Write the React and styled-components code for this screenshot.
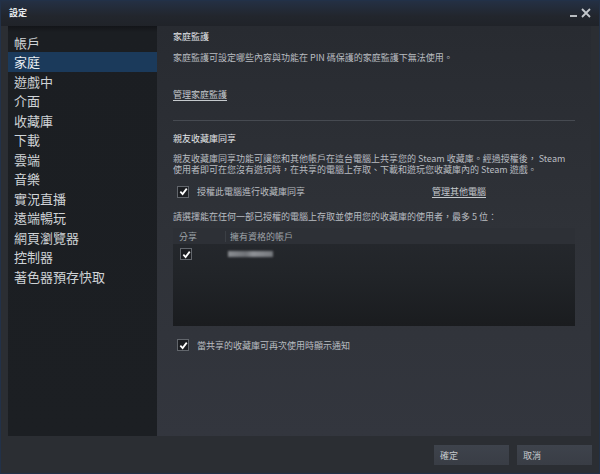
import React from 'react';
import styled, { createGlobalStyle } from 'styled-components';

const Global = createGlobalStyle`
  html, body { margin: 0; padding: 0; background: #1b1e23; }
  body { font-family: "Noto Sans CJK TC", "Noto Sans", Arial, sans-serif; }
`;

const Window = styled.div`
  width: 600px;
  height: 474px;
  box-sizing: border-box;
  border: 1px solid #223148;
  background: #2b2e33;
  display: flex;
  flex-direction: column;
  overflow: hidden;
`;

const TitleBar = styled.div`
  height: 25px;
  flex: none;
  display: flex;
  align-items: center;
  justify-content: space-between;
  padding: 0 8px 0 8px;
  background: linear-gradient(180deg, #243044 0%, #22262d 60%, #202329 100%);
`;

const Title = styled.span`
  color: #e8ebee;
  font-size: 9px;
  font-weight: 700;
  margin-top: -2px;
`;

const WinControls = styled.div`
  display: flex;
  align-items: center;
  gap: 3px;
  margin-top: -2px;
`;

const Main = styled.div`
  flex: 1;
  display: flex;
  padding: 0 8px 0 7px;
  min-height: 0;
`;

const Sidebar = styled.nav`
  width: 149px;
  flex: none;
  padding-top: 6.5px;
  box-sizing: border-box;
  background: linear-gradient(180deg, #131519 0px, #1b1e22 6px, #1c1f23 100%);
`;

const NavItem = styled.div`
  height: 19.5px;
  line-height: 19.5px;
  padding-left: 6px;
  font-size: 13px;
  color: ${p => (p.$active ? '#e9eef2' : '#cfd3d6')};
  background: ${p => (p.$active ? '#1b3a5b' : 'transparent')};
  white-space: nowrap;
`;

const Content = styled.section`
  flex: 1;
  padding: 5px 16px 0 16px;
  background: linear-gradient(180deg, #282b31 0%, #2f3238 50%, #33363e 100%);
  color: #b9bdc1;
  font-size: 9px;
  line-height: 11px;
`;

const Heading = styled.div`
  color: #e3e6e9;
  font-size: 9px;
  line-height: 12px;
  margin-top: ${p => p.$top || 0}px;
`;

const Text = styled.p`
  margin: ${p => p.$top || 0}px 0 0 0;
  font-size: 9px;
  line-height: 11.5px;
  white-space: nowrap;
`;

const LinkRow = styled.div`
  margin-top: ${p => p.$top || 0}px;
`;

const Link = styled.a`
  display: inline-block;
  color: #c5c9cd;
  text-decoration: underline;
  text-underline-offset: 2px;
  font-size: 9px;
  line-height: 12px;
`;

const Divider = styled.hr`
  border: 0;
  height: 1px;
  background: #464a51;
  margin: 19px 0 0 0;
`;

const CheckRow = styled.label`
  display: flex;
  align-items: center;
  margin-top: ${p => p.$top || 0}px;
  padding-left: 4px;
  height: 12px;
`;

const Box = styled.span`
  width: 10px;
  height: 10px;
  flex: none;
  border: 1px solid #62666c;
  background: #1c1e22;
  display: flex;
  align-items: center;
  justify-content: center;
`;

const CheckLabel = styled.span`
  margin-left: 8px;
  color: #b9bdc1;
  white-space: nowrap;
`;

const Spacer = styled.span`
  flex: 1;
`;

const SideLink = styled(Link)`
  margin-right: 89px;
`;

const Table = styled.div`
  margin-top: 6px;
  height: 98px;
  display: flex;
  flex-direction: column;
  background: linear-gradient(180deg, #26292e 0%, #212428 50%, #1a1c1f 100%);
`;

const TableHead = styled.div`
  height: 16px;
  flex: none;
  display: grid;
  grid-template-columns: 52px 1fr;
  align-items: center;
  background: #2d3036;
  color: #9ea3a8;
`;

const HeadCell = styled.div`
  padding-left: ${p => p.$pad || 6}px;
  border-left: ${p => (p.$sep ? '1px solid #3b3f45' : 'none')};
  line-height: 11px;
`;

const TableRow = styled.div`
  display: grid;
  grid-template-columns: 48px 1fr;
  align-items: center;
  height: 20px;
  padding-left: 7px;
`;

const Blurred = styled.span`
  display: inline-block;
  width: 45px;
  height: 6px;
  background: linear-gradient(90deg, #8a8d92 0%, #6f7277 40%, #8e9196 55%, #75787d 100%);
  filter: blur(1.2px);
`;

const Footer = styled.div`
  height: 37px;
  flex: none;
  display: flex;
  justify-content: flex-end;
  gap: 8px;
  padding: 9px 7px 0 0;
  box-sizing: border-box;
  background: #2b2e33;
`;

const Button = styled.button`
  width: 75px;
  height: 20px;
  border: 0;
  padding: 0 0 0 6px;
  text-align: left;
  background: linear-gradient(180deg, #3e434c 0%, #393d45 100%);
  color: #c4c8cc;
  font-family: inherit;
  font-size: 9px;
`;

const Check = () => (
  <svg width="9" height="9" viewBox="0 0 10 10">
    <path d="M1.5 5.2 L4 7.8 L8.6 1.8" fill="none" stroke="#ffffff" strokeWidth="2" />
  </svg>
);

const CheckBox = () => (
  <Box>
    <Check />
  </Box>
);

const navItems = ['帳戶', '家庭', '遊戲中', '介面', '收藏庫', '下載', '雲端', '音樂', '實況直播', '遠端暢玩', '網頁瀏覽器', '控制器', '著色器預存快取'];

export default function App() {
  return (
    <>
      <Global />
      <Window>
        <TitleBar>
          <Title>設定</Title>
          <WinControls>
            <svg width="8" height="10" viewBox="0 0 8 10">
              <rect x="0" y="7" width="7" height="2" fill="#b8bcc0" />
            </svg>
            <svg width="10" height="10" viewBox="0 0 10 10">
              <path d="M1 1 L9 9 M9 1 L1 9" stroke="#c4c8cc" strokeWidth="1.8" />
            </svg>
          </WinControls>
        </TitleBar>
        <Main>
          <Sidebar>
            {navItems.map(item => (
              <NavItem key={item} $active={item === '家庭'}>{item}</NavItem>
            ))}
          </Sidebar>
          <Content>
            <Heading>家庭監護</Heading>
            <Text $top={9}>家庭監護可設定哪些內容與功能在 PIN 碼保護的家庭監護下無法使用。</Text>
            <LinkRow $top={25}>
              <Link>管理家庭監護</Link>
            </LinkRow>
            <Divider />
            <Heading $top={12}>親友收藏庫同享</Heading>
            <Text $top={8}>
              親友收藏庫同享功能可讓您和其他帳戶在這台電腦上共享您的 Steam 收藏庫。經過授權後， Steam
              <br />
              使用者即可在您沒有遊玩時，在共享的電腦上存取、下載和遊玩您收藏庫內的 Steam 遊戲。
            </Text>
            <CheckRow $top={10}>
              <CheckBox />
              <CheckLabel>授權此電腦進行收藏庫同享</CheckLabel>
              <Spacer />
              <SideLink>管理其他電腦</SideLink>
            </CheckRow>
            <Text $top={13}>請選擇能在任何一部已授權的電腦上存取並使用您的收藏庫的使用者，最多 5 位：</Text>
            <Table>
              <TableHead>
                <HeadCell>分享</HeadCell>
                <HeadCell $sep $pad={4}>擁有資格的帳戶</HeadCell>
              </TableHead>
              <TableRow>
                <CheckBox />
                <Blurred />
              </TableRow>
            </Table>
            <CheckRow $top={13}>
              <CheckBox />
              <CheckLabel>當共享的收藏庫可再次使用時顯示通知</CheckLabel>
            </CheckRow>
          </Content>
        </Main>
        <Footer>
          <Button>確定</Button>
          <Button>取消</Button>
        </Footer>
      </Window>
    </>
  );
}
